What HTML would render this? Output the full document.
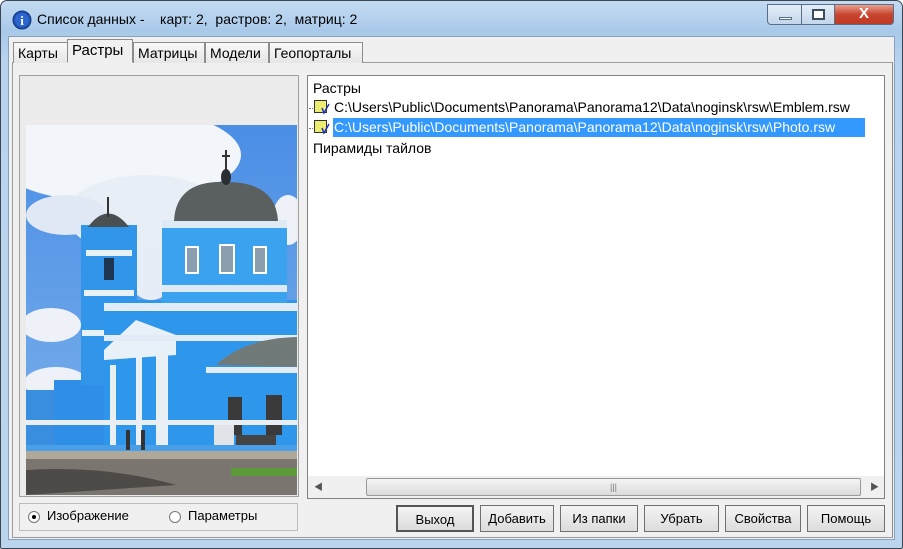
<!DOCTYPE html>
<html><head><meta charset="utf-8"><style>
*{margin:0;padding:0;box-sizing:border-box}
body{width:903px;height:549px;overflow:hidden;background:#fff;font-family:"Liberation Sans","Noto Sans CJK SC",sans-serif;font-size:13px;color:#000;position:relative}
.win{position:absolute;left:0;top:0;width:903px;height:549px;border:1px solid #3c4650;border-radius:7px 7px 2px 2px;background:linear-gradient(180deg,#c3dbf2 0,#a9c9ea 30px,#b8d3ee 60px,#bcd5ee 100%)}
.client{position:absolute;left:8px;top:36px;width:887px;height:504px;background:#f0f0f0;border:1px solid #8aa0b8}
.abs{position:absolute}
.title{left:37px;top:11px;font-size:14px}
.tab{position:absolute;top:42px;height:21px;border:1px solid #8c8c8c;border-bottom:none;background:linear-gradient(#fafafa,#e6e6e6);padding:2px 3px 0 4px;font-size:14px}
.btn{position:absolute;top:505px;height:27px;border:1px solid #707070;background:linear-gradient(#f4f4f4,#dcdcdc);font-size:13px;text-align:center;line-height:25px}
.ctl{position:absolute;top:4px;height:21px;border:1px solid #5a6f86;background:linear-gradient(#e3edf8,#c4d6ea)}
</style></head><body>
<div class="win"></div>
<svg class="abs" style="left:12px;top:10px" width="20" height="20"><circle cx="10" cy="10" r="9" fill="#1f4fb0" stroke="#123a80"/><circle cx="10" cy="10" r="7" fill="#2c66cc"/><text x="10" y="15" font-family="Liberation Serif" font-weight="bold" font-size="13" fill="#fff" text-anchor="middle">i</text></svg>
<div class="abs title">Список данных -&nbsp;&nbsp;&nbsp; карт: 2,&nbsp; растров: 2,&nbsp; матриц: 2</div>
<div class="ctl" style="left:767px;width:35px;border-radius:0 0 0 4px"><div class="abs" style="left:11px;top:12px;width:13px;height:3px;background:#fff;border:1px solid #56708c"></div></div>
<div class="ctl" style="left:801px;width:34px"><div class="abs" style="left:10px;top:4px;width:13px;height:11px;border:2px solid #3b4d62;background:#fff"></div></div>
<div class="ctl" style="left:834px;width:60px;border-radius:0 0 4px 0;background:linear-gradient(#e8a090,#c8452e 50%,#c03a24)"><div class="abs" style="left:24px;top:0;color:#fff;font-weight:bold;font-size:15px">X</div></div>
<div class="client"></div>
<div class="abs" style="left:12px;top:62px;width:881px;height:476px;border:1px solid #9c9c9c;background:#f0f0f0;border-right-color:#8a8a8a"></div>
<div class="tab" style="left:13px;width:55px;top:42px">Карты</div>
<div class="tab" style="left:67px;width:66px;top:39px;height:24px;background:#f0f0f0;border-bottom:1px solid #f0f0f0;font-size:15px;z-index:2">Растры</div>
<div class="tab" style="left:133px;width:72px">Матрицы</div>
<div class="tab" style="left:205px;width:64px">Модели</div>
<div class="tab" style="left:269px;width:94px">Геопорталы</div>
<div class="abs" style="left:19px;top:75px;width:280px;height:422px;border:1px solid #a0a0a0;background:#ebebeb"></div>
<svg class="abs" style="left:26px;top:125px" width="271" height="370" viewBox="0 0 271 370">
<defs><linearGradient id="sk" x1="0" y1="0" x2="0" y2="1"><stop offset="0" stop-color="#4a8ee6"/><stop offset="1" stop-color="#7fb2ea"/></linearGradient></defs>
<rect width="271" height="370" fill="url(#sk)"/>
<ellipse cx="90" cy="30" rx="125" ry="48" fill="#f2f5fa"/>
<ellipse cx="120" cy="90" rx="80" ry="40" fill="#e8eef6"/>
<ellipse cx="40" cy="90" rx="40" ry="20" fill="#dfe8f4"/>
<ellipse cx="25" cy="200" rx="30" ry="17" fill="#eef2f8"/>
<ellipse cx="30" cy="258" rx="32" ry="16" fill="#eef2f8"/>
<ellipse cx="262" cy="95" rx="16" ry="25" fill="#eef2f8"/>
<ellipse cx="125" cy="145" rx="25" ry="30" fill="#e6edf6"/>
<rect x="0" y="265" width="30" height="60" fill="#3a8ee0"/>
<rect x="28" y="255" width="55" height="70" fill="#2f8fe6"/>
<rect x="55" y="100" width="56" height="160" fill="#3196ea"/>
<path d="M62 102 Q82 75 103 102Z" fill="#4a4f52"/><rect x="81" y="72" width="2" height="20" fill="#333"/>
<rect x="60" y="125" width="46" height="6" fill="#e8f0f8"/><rect x="58" y="165" width="50" height="6" fill="#e8f0f8"/><rect x="56" y="205" width="54" height="6" fill="#e8f0f8"/>
<rect x="78" y="133" width="10" height="22" fill="#1d3550"/><rect x="78" y="175" width="10" height="22" fill="#1d3550"/>
<rect x="78" y="175" width="197" height="153" fill="#2e97ec"/>
<path d="M78 225 L110 195 L150 210 L150 230 L78 235Z" fill="#e9f1f8"/>
<rect x="136" y="95" width="125" height="90" fill="#3aa2ee"/>
<rect x="136" y="95" width="125" height="8" fill="#dde9f4"/><rect x="136" y="160" width="125" height="7" fill="#dde9f4"/>
<path d="M148 96 Q150 55 200 57 Q250 57 252 96Z" fill="#5a5f60"/>
<rect x="199" y="25" width="2" height="32" fill="#333"/><rect x="196" y="30" width="8" height="2" fill="#333"/><ellipse cx="200" cy="52" rx="5" ry="8" fill="#2a2e30"/>
<rect x="160" y="122" width="12" height="26" fill="#8a9eb0" stroke="#fff" stroke-width="2"/><rect x="194" y="120" width="14" height="28" fill="#8a9eb0" stroke="#fff" stroke-width="2"/><rect x="228" y="122" width="12" height="26" fill="#8a9eb0" stroke="#fff" stroke-width="2"/>
<rect x="78" y="178" width="197" height="8" fill="#e2ecf6"/><rect x="78" y="210" width="197" height="6" fill="#e2ecf6"/>
<path d="M190 240 Q220 212 275 212 L275 242Z" fill="#707a78"/>
<rect x="130" y="225" width="12" height="100" fill="#e8f0f6"/><rect x="84" y="240" width="6" height="80" fill="#e8f0f6"/><rect x="110" y="232" width="6" height="90" fill="#e8f0f6"/>
<rect x="180" y="242" width="95" height="6" fill="#e2ecf6"/>
<rect x="202" y="272" width="14" height="38" fill="#3a3a3a"/><rect x="240" y="270" width="16" height="40" fill="#3a3a3a"/>
<rect x="0" y="295" width="271" height="5" fill="#e8eef4"/>
<rect x="188" y="300" width="20" height="28" fill="#e0e4e8"/><rect x="210" y="310" width="40" height="20" fill="#444"/>
<rect x="0" y="320" width="271" height="8" fill="#4aa0e8"/>
<rect x="0" y="326" width="271" height="44" fill="#7a756e"/>
<rect x="0" y="326" width="271" height="8" fill="#b0a898"/>
<path d="M0 345 Q80 340 150 360 L0 370Z" fill="#4e4a48"/>
<rect x="205" y="343" width="66" height="8" fill="#5c9a3a"/>
<rect x="100" y="305" width="4" height="20" fill="#333"/><rect x="115" y="305" width="4" height="20" fill="#333"/>
</svg>
<div class="abs" style="left:19px;top:503px;width:279px;height:28px;border:1px solid #bcbcbc"></div>
<div class="abs" style="left:28px;top:511px;width:12px;height:12px;border-radius:50%;border:1px solid #777;background:#fff"><div class="abs" style="left:3px;top:3px;width:4px;height:4px;border-radius:50%;background:#000"></div></div>
<div class="abs" style="left:47px;top:508px">Изображение</div>
<div class="abs" style="left:169px;top:511px;width:12px;height:12px;border-radius:50%;border:1px solid #777;background:#fff"></div>
<div class="abs" style="left:188px;top:508px">Параметры</div>
<div class="abs" style="left:307px;top:75px;width:578px;height:424px;border:1px solid #828282;background:#fff"></div>
<div class="abs" style="left:313px;top:80px;font-size:14px">Растры</div>
<div class="abs" style="left:309px;top:108px;width:6px;border-top:1px dotted #777"></div>
<div class="abs" style="left:309px;top:128px;width:6px;border-top:1px dotted #777"></div>
<svg class="abs" style="left:314px;top:100px" width="16" height="15"><rect x="0.5" y="0.5" width="12" height="12" fill="#ecec70" stroke="#333"/><path d="M8 8 L10 13 L15 4" stroke="#2030c0" stroke-width="1.5" fill="none"/></svg>
<div class="abs" style="left:334px;top:99px;font-size:14px">C:\Users\Public\Documents\Panorama\Panorama12\Data\noginsk\rsw\Emblem.rsw</div>
<svg class="abs" style="left:314px;top:120px" width="16" height="15"><rect x="0.5" y="0.5" width="12" height="12" fill="#ecec70" stroke="#333"/><path d="M8 8 L10 13 L15 4" stroke="#2030c0" stroke-width="1.5" fill="none"/></svg>
<div class="abs" style="left:333px;top:118px;width:532px;height:19px;background:#3399ff"></div>
<div class="abs" style="left:334px;top:119px;font-size:14px;color:#fff">C:\Users\Public\Documents\Panorama\Panorama12\Data\noginsk\rsw\Photo.rsw</div>
<div class="abs" style="left:313px;top:140px;font-size:14px">Пирамиды тайлов</div>
<div class="abs" style="left:308px;top:476px;width:576px;height:22px;background:#f0f0f0"></div>
<div class="abs" style="left:366px;top:478px;width:495px;height:18px;border:1px solid #9a9a9a;border-radius:2px;background:linear-gradient(#f4f4f4,#dcdcdc);text-align:center;font-size:9px;color:#777;line-height:16px">|||</div>
<div class="abs" style="left:314px;top:480px;font-size:9px;color:#555">◀</div>
<div class="abs" style="left:870px;top:480px;font-size:9px;color:#555">▶</div>
<div class="btn" style="left:396px;width:78px;border:2px solid #555">Выход</div>
<div class="btn" style="left:480px;width:74px">Добавить</div>
<div class="btn" style="left:560px;width:78px">Из папки</div>
<div class="btn" style="left:644px;width:75px">Убрать</div>
<div class="btn" style="left:725px;width:76px">Свойства</div>
<div class="btn" style="left:807px;width:78px">Помощь</div>
</body></html>
